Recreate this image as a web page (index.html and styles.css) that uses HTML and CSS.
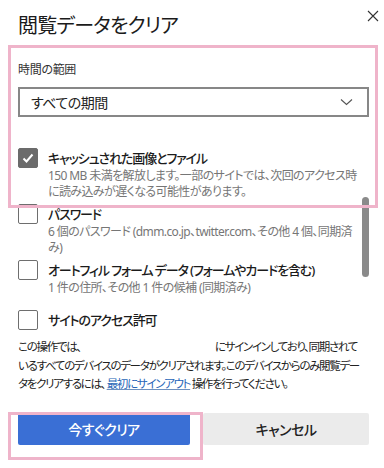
FILE: index.html
```html
<!DOCTYPE html>
<html lang="ja">
<head>
    <meta charset="UTF-8">
    <title>閲覧データをクリア</title>
    <link rel="stylesheet" href="styles.css">
</head>
<body>
<div id="clearData">
    <span class="close">
        <svg width="12" height="12" viewBox="0 0 12 12"><path d="M1 1L11 11M11 1L1 11" stroke="#333" stroke-width="1.1" fill="none"/></svg>
    </span>
    <h1 class="title">閲覧データをクリア</h1>

    <!-- 時間の範囲 -->
    <div class="label">時間の範囲</div>
    <div class="select">
        <span>すべての期間</span>
        <svg width="13" height="8" viewBox="0 0 13 8"><path d="M1 1.5L6.5 6.5L12 1.5" stroke="#555" stroke-width="1.1" fill="none"/></svg>
    </div>

    <!-- 項目 -->
    <ul class="options">
        <li class="option">
            <span class="box checked">
                <svg width="20" height="20" viewBox="0 0 20 20"><path d="M5.5 10.5L8.5 13.5L14.5 6.5" stroke="#fff" stroke-width="2" fill="none"/></svg>
            </span>
            <div class="text">
                <div class="name">キャッシュされた画像とファイル</div>
                <div class="desc">150 MB 未満を解放します。一部のサイトでは、次回のアクセス時に読み込みが遅くなる可能性があります。</div>
            </div>
        </li>
        <li class="option">
            <span class="box"></span>
            <div class="text">
                <div class="name">パスワード</div>
                <div class="desc">6 個のパスワード (dmm.co.jp、twitter.com、その他 4 個、同期済み)</div>
            </div>
        </li>
        <li class="option">
            <span class="box"></span>
            <div class="text">
                <div class="name">オートフィル フォーム データ (フォームやカードを含む)</div>
                <div class="desc">1 件の住所、その他 1 件の候補 (同期済み)</div>
            </div>
        </li>
        <li class="option last">
            <span class="box"></span>
            <div class="text">
                <div class="name">サイトのアクセス許可</div>
            </div>
        </li>
    </ul>

    <p class="notice">この操作では、<span class="blank"></span>にサインインしており、同期されているすべてのデバイスのデータがクリアされます。このデバイスからのみ閲覧データをクリアするには、<a href="#" class="link">最初にサインアウト</a>操作を行ってください。</p>

    <div class="buttons">
        <button class="btn primary">今すぐクリア</button>
        <button class="btn">キャンセル</button>
    </div>

    <div class="scrollbar"></div>
    <div class="mark range"></div>
    <div class="mark action"></div>
</div>
</body>
</html>
```

FILE: styles.css
```css
body{
    margin: 0;
    background: #fff;
}
#clearData{
    position: relative;
    width: 384px;
    height: 468px;
    padding: 12px 15px 0 18px;
    box-sizing: border-box;
    font-family: "Noto Sans", "Noto Sans CJK JP", sans-serif;
    font-feature-settings: "palt";
    color: #1b1b1b;
    overflow: hidden;
}
#clearData .close{
    position: absolute;
    top: 5px;
    right: 5px;
}
#clearData .title{
    margin: 0;
    font-size: 20px;
    line-height: 28px;
    font-weight: 400;
    letter-spacing: -0.8px;
}
#clearData .label{
    margin-top: 22px;
    font-size: 12px;
    line-height: 16px;
    color: #333;
    letter-spacing: -0.3px;
}
#clearData .select{
    display: flex;
    align-items: center;
    justify-content: space-between;
    margin-top: 9px;
    height: 30px;
    padding: 0 14px 0 11px;
    border: 2px solid #878787;
    box-sizing: border-box;
    font-size: 14px;
    letter-spacing: -0.5px;
    color: #222;
}
#clearData .options{
    list-style: none;
    width: 342px;
    margin: 31px 0 0;
    padding: 0;
}
#clearData .option{
    display: flex;
    gap: 10px;
    margin-bottom: 4px;
}
#clearData .option.last{
    margin-top: 14px;
}
#clearData .box{
    flex: none;
    width: 20px;
    height: 20px;
    border: 1px solid #6e6e6e;
    border-radius: 2px;
    box-sizing: border-box;
}
#clearData .box.checked{
    background: #6b6b6b;
    border-color: #6b6b6b;
}
#clearData .box svg{
    display: block;
    margin: -1px;
}
#clearData .name{
    font-size: 13px;
    line-height: 20px;
    font-weight: 500;
    letter-spacing: -1.1px;
}
#clearData .desc{
    font-size: 12px;
    line-height: 16px;
    color: #767676;
    letter-spacing: -0.6px;
}
#clearData .notice{
    width: 345px;
    margin: 8px 0 0;
    font-size: 11.5px;
    line-height: 18.5px;
    letter-spacing: -1.3px;
    color: #222;
}
#clearData .blank{
    display: inline-block;
    width: 134px;
}
#clearData .link{
    margin: 0 1.5px;
    color: #2866b8;
    text-decoration: underline;
    text-decoration-color: #6d90bf;
}
#clearData .buttons{
    display: flex;
    gap: 13px;
    margin-top: 19px;
    width: 351px;
}
#clearData .btn{
    height: 32px;
    border: none;
    border-radius: 2px;
    background: #ebebeb;
    font-family: inherit;
    font-feature-settings: "palt";
    font-size: 14px;
    font-weight: 500;
    letter-spacing: -0.5px;
    color: #222;
    flex: 1;
}
#clearData .btn.primary{
    flex: none;
    width: 172px;
    background: #3a6fd5;
    color: #fff;
}
#clearData .scrollbar{
    position: absolute;
    left: 362px;
    top: 197px;
    width: 7px;
    height: 80px;
    border-radius: 4px;
    background: #8a8a8a;
}
#clearData .mark{
    position: absolute;
    border: 3px solid #efb4ca;
    box-sizing: border-box;
}
#clearData .mark.range{
    left: 8px;
    top: 45px;
    width: 370px;
    height: 163px;
}
#clearData .mark.action{
    left: 8px;
    top: 412px;
    width: 195px;
    height: 48px;
}
```
